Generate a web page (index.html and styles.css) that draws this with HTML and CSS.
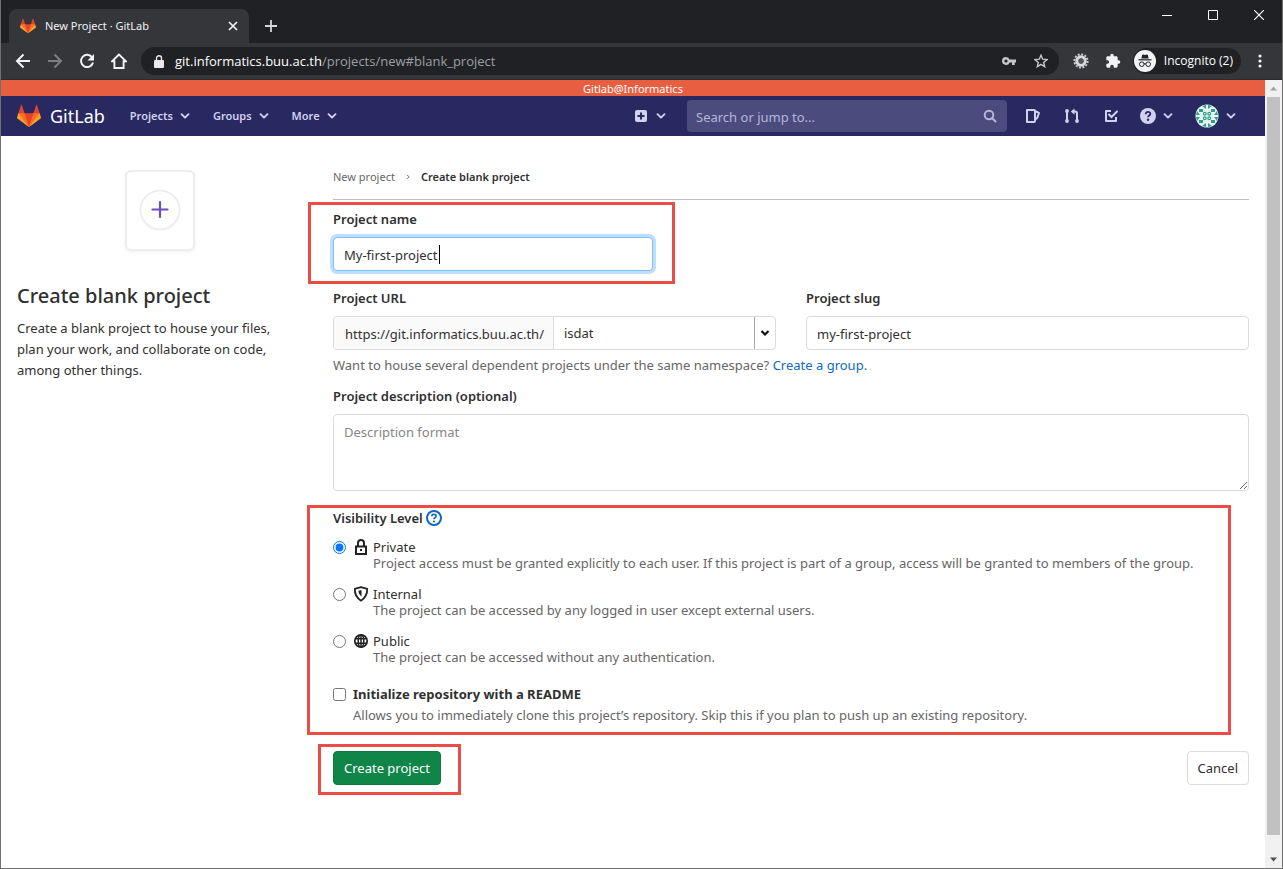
FILE: index.html
```html
<!DOCTYPE html>
<html lang="en">
<head>
<meta charset="utf-8">
<title>New Project · GitLab</title>
<link rel="stylesheet" href="styles.css">
</head>
<body>
<svg class="defs" aria-hidden="true">
  <symbol id="tanuki" viewBox="0 0 36 36">
    <path fill="#e24329" d="M2 14l9.38 9v-9l-4-12.28c-.205-.632-1.176-.632-1.38 0z"/>
    <path fill="#e24329" d="M34 14l-9.38 9v-9l4-12.28c.205-.632 1.176-.632 1.38 0z"/>
    <path fill="#e24329" d="M18 34.38 3 14h30z"/>
    <path fill="#fc6d26" d="M18 34.38 11.38 14H2l4 11z"/>
    <path fill="#fc6d26" d="M18 34.38 24.62 14H34l-4 11z"/>
    <path fill="#fca326" d="M2 14 .1 20.16c-.18.565 0 1.2.5 1.56L18 34.38z"/>
    <path fill="#fca326" d="m34 14 1.9 6.16c.18.565 0 1.2-.5 1.56L18 34.38z"/>
  </symbol>
  <symbol id="chevron" viewBox="0 0 10 10"><path d="M1.5 3.2 5 6.7l3.500-3.500" fill="none" stroke="currentColor" stroke-width="1.900" stroke-linecap="round" stroke-linejoin="round"/></symbol>
</svg>
<div class="window">
  <header class="tabs">
    <div class="tab">
      <svg class="tab-logo"><use href="#tanuki"/></svg>
      <span class="tab-title">New Project · GitLab</span>
      <button class="plain" aria-label="Close tab"><svg width="10" height="10" viewBox="0 0 10 10"><path d="M1 1l8 8M9 1 1 9" stroke="#f1f3f4" stroke-width="1.700"/></svg></button>
    </div>
    <button class="plain new-tab" aria-label="New tab"><svg width="12" height="12" viewBox="0 0 12 12"><path d="M6 0v12M0 6h12" stroke="#d5d7da" stroke-width="1.800"/></svg></button>
    <div class="window-buttons">
      <button class="plain" aria-label="Minimize"><svg width="10" height="10"><path d="M0 5.500h10" stroke="#fff"/></svg></button>
      <button class="plain" aria-label="Maximize"><svg width="10" height="10"><path d="M.5.5h9v9h-9z" fill="none" stroke="#fff"/></svg></button>
      <button class="plain" aria-label="Close"><svg width="10" height="10"><path d="M0 0l10 10M10 0 0 10" stroke="#fff" stroke-width="1.200"/></svg></button>
    </div>
  </header>
  <div class="toolbar">
    <button class="plain tool" aria-label="Back"><svg width="16" height="16" viewBox="0 0 16 16"><path d="M15 8H2M8.500 1.500 2 8l6.500 6.500" fill="none" stroke="#f1f3f4" stroke-width="2"/></svg></button>
    <button class="plain tool" aria-label="Forward"><svg width="16" height="16" viewBox="0 0 16 16"><path d="M1 8h13M7.500 1.500 14 8l-6.500 6.500" fill="none" stroke="#7c7e82" stroke-width="2"/></svg></button>
    <button class="plain tool" aria-label="Reload"><svg width="16" height="16" viewBox="0 0 16 16"><path d="M13.200 4.600A6.100 6.100 0 1 0 14 9.500" fill="none" stroke="#f1f3f4" stroke-width="2"/><path d="M15 1v6.500H8.500z" fill="#f1f3f4"/></svg></button>
    <button class="plain tool" aria-label="Home"><svg width="16" height="16" viewBox="0 0 16 16"><path d="M8 1.500 1 8.300h2.400V15h9.200V8.300H15z" fill="none" stroke="#f1f3f4" stroke-width="1.900"/></svg></button>
    <div class="address">
      <svg width="10" height="13" viewBox="0 0 10 13"><path d="M1 5h8q1 0 1 1v6q0 1-1 1H1q-1 0-1-1V6q0-1 1-1z" fill="#e8eaed"/><path d="M2.500 5.500V3.200a2.500 2.500 0 0 1 5 0v2.300" fill="none" stroke="#e8eaed" stroke-width="1.400"/></svg>
      <span class="url">git.informatics.buu.ac.th<span class="url-path">/projects/new#blank_project</span></span>
      <svg width="14" height="10" viewBox="0 0 14 10"><path fill="#c4c7cb" fill-rule="evenodd" d="M4 1a4 4 0 0 1 3.700 2.500H14v3h-1.300V9H10V6.500H7.700A4 4 0 1 1 4 1zm0 2.400a1.600 1.600 0 1 0 0 3.200 1.600 1.600 0 0 0 0-3.200z"/></svg>
      <svg width="14" height="14" viewBox="0 0 14 14"><path d="m7 1.200 1.700 4 4.300.4-3.300 2.800 1 4.300L7 10.400l-3.700 2.300 1-4.300L1 5.600l4.300-.4z" fill="none" stroke="#c4c7cb" stroke-width="1.400"/></svg>
    </div>
    <button class="plain tool extension" aria-label="Settings extension"><svg width="16" height="16" viewBox="0 0 16 16"><circle cx="8" cy="8" r="6.600" fill="none" stroke="#c9c9c9" stroke-width="2" stroke-dasharray="2 1.450"/><circle cx="8" cy="8" r="4.200" fill="none" stroke="#dadada" stroke-width="3"/><circle cx="8" cy="8" r="2.300" fill="#55575b"/></svg></button>
    <button class="plain tool" aria-label="Extensions"><svg width="16" height="16" viewBox="0 0 24 24"><path fill="#f1f3f4" d="M20.500 11H19V7c0-1.100-.9-2-2-2h-4V3.500a2.500 2.500 0 0 0-5 0V5H4c-1.100 0-2 .9-2 2v3.800h1.500a2.700 2.700 0 0 1 0 5.400H2V20c0 1.100.9 2 2 2h3.800v-1.500a2.700 2.700 0 0 1 5.400 0V22H17c1.100 0 2-.9 2-2v-4h1.500a2.500 2.500 0 0 0 0-5z"/></svg></button>
    <button class="profile">
      <svg width="22" height="22" viewBox="0 0 22 22"><circle cx="11" cy="11" r="11" fill="#f1f3f4"/><path d="M7.300 8.500 8.200 5q.3-.8 1-.5L11 5l1.800-.5q.7-.3 1 .5l.9 3.500z" fill="#202124"/><path d="M4.500 9.800h13" stroke="#202124" stroke-width="1.200"/><g fill="none" stroke="#202124"><circle cx="7.800" cy="14.200" r="2.300"/><circle cx="14.200" cy="14.200" r="2.300"/><path d="M10 14q1-.7 2 0"/></g></svg>
      <span>Incognito (2)</span>
    </button>
    <button class="plain menu" aria-label="Menu"><svg width="4" height="14"><g fill="#f1f3f4"><circle cx="2" cy="2" r="1.600"/><circle cx="2" cy="7" r="1.600"/><circle cx="2" cy="12" r="1.600"/></g></svg></button>
  </div>

  <div class="viewport">
    <div class="page">
      <div class="banner">Gitlab@Informatics</div>
      <nav class="navbar">
        <a class="brand" href="#"><svg class="brand-logo"><use href="#tanuki"/></svg>GitLab</a>
        <div class="nav-links">
          <button class="nav-item">Projects<svg class="chev"><use href="#chevron"/></svg></button>
          <button class="nav-item">Groups<svg class="chev"><use href="#chevron"/></svg></button>
          <button class="nav-item">More<svg class="chev"><use href="#chevron"/></svg></button>
        </div>
        <button class="nav-item nav-new" aria-label="New"><svg width="12" height="12" viewBox="0 0 12 12"><rect width="12" height="12" rx="2" fill="#d1d1f0"/><path d="M6 2.500v7M2.500 6h7" stroke="#292961" stroke-width="2"/></svg><svg class="chev"><use href="#chevron"/></svg></button>
        <div class="search">
          <input class="search-input" type="text" placeholder="Search or jump to..." aria-label="Search or jump to">
          <svg width="14" height="14" viewBox="0 0 14 14"><circle cx="6" cy="6" r="4.300" fill="none" stroke="#b5b5dc" stroke-width="2"/><path d="m9.300 9.300 3.200 3.200" stroke="#b5b5dc" stroke-width="2" stroke-linecap="round"/></svg>
        </div>
        <div class="nav-icons">
          <a href="#" class="nav-icon" aria-label="Issues"><svg width="16" height="16" viewBox="0 0 16 16"><path d="M2 2h7q1 0 1 1v10q0 1-1 1H2zM10 3l4 1.800-1.600 5-2.400 2" fill="none" stroke="#d1d1f0" stroke-width="2" stroke-linejoin="round"/></svg></a>
          <a href="#" class="nav-icon" aria-label="Merge requests"><svg width="16" height="16" viewBox="0 0 16 16"><path d="M3 2.500v11M8.500 3.500H11q2 0 2 2v8" fill="none" stroke="#d1d1f0" stroke-width="2"/><path d="M10.500.5v6.200L6.800 3.600z" fill="#d1d1f0"/><circle cx="3" cy="3" r="1.900" fill="#d1d1f0"/><circle cx="3" cy="13" r="1.900" fill="#d1d1f0"/><circle cx="13" cy="13" r="1.900" fill="#d1d1f0"/></svg></a>
          <a href="#" class="nav-icon" aria-label="To-Do List"><svg width="16" height="16" viewBox="0 0 16 16"><path d="M8 3H3v10h10V9" fill="none" stroke="#d1d1f0" stroke-width="2" stroke-linejoin="round"/><path d="m6 6.500 2.500 2.500L14 3.500" fill="none" stroke="#d1d1f0" stroke-width="2" stroke-linecap="round"/></svg></a>
        </div>
        <button class="nav-item nav-help" aria-label="Help"><svg width="16" height="16" viewBox="0 0 16 16"><circle cx="8" cy="8" r="8" fill="#d1d1f0"/><path d="M5.700 6.200C5.700 3 10.500 3.200 10.300 6c0 1.500-2.300 1.500-2.300 3.300" fill="none" stroke="#292961" stroke-width="1.800"/><circle cx="8" cy="11.700" r="1.200" fill="#292961"/></svg><svg class="chev"><use href="#chevron"/></svg></button>
        <button class="nav-item nav-user" aria-label="Account">
          <svg width="24" height="24" viewBox="0 0 24 24"><circle cx="12" cy="12" r="11.500" fill="#f0f0f0"/><g fill="#23a58c"><path d="M7 2l4-1v4zM17 2l-4-1v4zM7 22l4 1v-4zM17 22l-4 1v-4zM2 7l-1 4h4zM2 17l-1-4h4zM22 7l1 4h-4zM22 17l1-4h-4z"/><path d="M4 5h4v3H4zM16 5h4v3h-4zM4 16h4v3H4zM16 16h4v3h-4z"/><g fill="none" stroke="#23a58c" stroke-width="1.200"><circle cx="9.800" cy="9.800" r="1.400"/><circle cx="14.200" cy="9.800" r="1.400"/><circle cx="9.800" cy="14.200" r="1.400"/><circle cx="14.200" cy="14.200" r="1.400"/></g></g></svg><svg class="chev"><use href="#chevron"/></svg></button>
      </nav>

      <div class="content">
        <aside class="intro">
          <svg class="intro-art" width="82" height="94" viewBox="-1 0 82 94"><rect x="7" y="8" width="68" height="79" rx="5" fill="#fff" stroke="#f8f8f8" stroke-width="4"/><rect x="7" y="7" width="68" height="79" rx="5" fill="#fff" stroke="#eee" stroke-width="2"/><circle cx="41" cy="46" r="19.500" fill="#fff" stroke="#eee" stroke-width="2"/><path d="M41 38v15M33.500 45.500h15" stroke="#6b4fbb" stroke-width="2.200" stroke-linecap="round"/></svg>
          <h1 class="intro-title">Create blank project</h1>
          <p class="intro-text">Create a blank project to house your files, plan your work, and collaborate on code, among other things.</p>
        </aside>
        <main class="main">
          <nav class="crumbs" aria-label="Breadcrumb"><a href="#">New project</a><svg width="6" height="8" viewBox="0 0 6 8"><path d="m2 1.800 2 2-2 2" fill="none" stroke="#666"/></svg><strong>Create blank project</strong></nav>
          <form class="form">
            <div class="field field-name">
              <label for="name">Project name</label>
              <div class="name-box"><input class="control focused" id="name" type="text" value="My-first-project"><span class="caret"></span></div>
            </div>
            <div class="field columns">
              <div>
                <label for="namespace">Project URL</label>
                <div class="url-group">
                  <span class="url-prefix">https://git.informatics.buu.ac.th/</span>
                  <div class="select-box">
                    <select class="select" id="namespace"><option>isdat</option></select>
                    <span class="select-arrow"><svg width="10" height="10" viewBox="0 0 10 10"><path d="m1.500 3 3.500 3.500L8.500 3" fill="none" stroke="#111" stroke-width="2.200"/></svg></span>
                  </div>
                </div>
              </div>
              <div>
                <label for="slug">Project slug</label>
                <input class="control" id="slug" type="text" value="my-first-project">
              </div>
            </div>
            <p class="help">Want to house several dependent projects under the same namespace? <a href="#">Create a group.</a></p>
            <div class="field">
              <label for="description">Project description (optional)</label>
              <textarea class="control description" id="description" placeholder="Description format"></textarea>
            </div>
            <div class="field options">
              <fieldset class="visibility">
                <legend>Visibility Level <a href="#" aria-label="About visibility"><svg width="16" height="16" viewBox="0 0 16 16"><circle cx="8" cy="8" r="7" fill="none" stroke="#1068bf" stroke-width="2"/><path d="M5.800 6.300C5.800 3.500 10.200 3.700 10.100 6.200c0 1.400-2.100 1.400-2.100 3" fill="none" stroke="#1068bf" stroke-width="1.700"/><circle cx="8" cy="11.500" r="1.100" fill="#1068bf"/></svg></a></legend>
                <div class="option">
                  <input type="radio" name="visibility" id="private" checked>
                  <label for="private"><svg width="16" height="16" viewBox="0 0 16 16"><path d="M3 7.500h10V15H3zM5 7.500V4a3 3 0 0 1 6 0v3.500" fill="none" stroke="#222" stroke-width="2"/><rect x="7" y="10" width="2" height="2" fill="#222"/></svg>Private</label>
                  <p>Project access must be granted explicitly to each user. If this project is part of a group, access will be granted to members of the group.</p>
                </div>
                <div class="option">
                  <input type="radio" name="visibility" id="internal">
                  <label for="internal"><svg width="16" height="16" viewBox="0 0 16 16"><path d="M8 1.200 14.200 2.800Q14.500 10.500 8 14.700 1.500 10.500 1.800 2.800z" fill="none" stroke="#222" stroke-width="1.800" stroke-linejoin="round"/><path d="M8.500 4v6.500Q5.500 8.500 5.500 4.800z" fill="#222"/></svg>Internal</label>
                  <p>The project can be accessed by any logged in user except external users.</p>
                </div>
                <div class="option">
                  <input type="radio" name="visibility" id="public">
                  <label for="public"><svg width="16" height="16" viewBox="0 0 16 16"><circle cx="8" cy="8" r="6.200" fill="none" stroke="#222" stroke-width="1.700"/><g fill="none" stroke="#222" stroke-width="1.500"><ellipse cx="8" cy="8" rx="2.800" ry="6"/><path d="M8 2v12M2.500 5.700h11M2.500 10.300h11"/></g></svg>Public</label>
                  <p>The project can be accessed without any authentication.</p>
                </div>
              </fieldset>
              <div class="readme">
                <input type="checkbox" id="readme">
                <label for="readme">Initialize repository with a README</label>
                <p>Allows you to immediately clone this project’s repository. Skip this if you plan to push up an existing repository.</p>
              </div>
            </div>
            <div class="actions">
              <div class="submit"><button class="btn btn-success" type="button">Create project</button></div>
              <button class="btn" type="button">Cancel</button>
            </div>
          </form>
        </main>
      </div>
    </div>
    <div class="scrollbar">
      <svg width="17" height="17"><path d="m5 10.500 3.500-4 3.500 4z" fill="#a3a3a3"/></svg>
      <div class="thumb"></div>
      <svg width="17" height="17"><path d="m5 6.500 3.500 4 3.500-4z" fill="#505050"/></svg>
    </div>
  </div>
</div>
</body>
</html>
```
FILE: styles.css
```css
* { box-sizing: border-box; }
body { margin: 0; font: 13px/20px "Noto Sans", sans-serif; color: #303030; }
button, input, select, textarea { font: inherit; color: inherit; margin: 0; }
p, h1, fieldset { margin: 0; padding: 0; border: 0; }
a { color: #1068bf; text-decoration: none; }
svg { display: block; flex: none; }
.defs { position: absolute; width: 0; height: 0; }
.plain { display: grid; place-items: center; padding: 0; border: 0; background: none; }

.window { min-height: 100vh; display: flex; flex-direction: column; border: 1px solid #707070; border-top: 0; background: #fff; }

/* Browser chrome */
.tabs { display: flex; height: 43px; padding-left: 8px; background: #202124; color: #f1f3f4; font: 11px/16px "Noto Sans", sans-serif; }
.tab { display: flex; align-items: center; width: 240px; margin-top: 9px; padding: 0 11px; border-radius: 8px 8px 0 0; background: #35363a; }
.tab-logo { width: 16px; height: 16px; margin-right: 9px; }
.tab-title { flex: 1; }
.new-tab { width: 44px; margin-top: 9px; }
.window-buttons { display: flex; margin-left: auto; height: 30px; }
.window-buttons .plain { width: 46px; }
.toolbar { display: flex; align-items: center; height: 37px; padding: 0 12px 0 6px; background: #35363a; border-bottom: 1px solid #2b2c30; }
.tool { width: 32px; height: 32px; }
.address { flex: 1; display: flex; align-items: center; gap: 18px; height: 28px; margin-left: 6px; padding: 0 11px 0 13px; border-radius: 14px; background: #202124; }
.url { flex: 1; margin-left: -7px; font: 13px/18px "Open Sans", sans-serif; color: #fff; }
.url-path { color: #9aa0a6; }
.extension { margin-left: 6px; }
.profile { display: flex; align-items: center; gap: 8px; height: 26px; margin-left: 4px; padding: 0 8px 0 1px; border: 0; border-radius: 13px; background: #202124; color: #fff; font: 12px/16px "Open Sans", sans-serif; }
.menu { width: 20px; height: 28px; margin-left: 9px; }

/* Page and scroll bar */
.viewport { flex: 1; display: flex; }
.page { flex: 1; min-width: 0; }
.scrollbar { display: flex; flex-direction: column; width: 17px; background: #f1f1f1; }
.thumb { flex: 1; margin: 0 2px 16px; background: #c1c1c1; }
.banner { padding-top: 1px; background: #e75e40; color: #fff; text-align: center; font-size: 11px; line-height: 15px; }
.navbar { display: flex; align-items: center; height: 40px; padding: 0 29px 0 16px; background: #292961; color: #d1d1f0; }
.brand { display: flex; align-items: center; gap: 9px; color: #fff; font-size: 18px; line-height: 24px; }
.brand-logo { width: 24px; height: 24px; }
.nav-links { display: flex; gap: 23px; margin-left: 25px; }
.nav-item { display: flex; align-items: center; gap: 7px; padding: 0; border: 0; background: none; font: 600 11px/16px "Noto Sans", sans-serif; }
.chev { width: 10px; height: 10px; }
.nav-new { margin-left: auto; gap: 9px; }
.search { display: flex; align-items: center; width: 320px; height: 32px; margin-left: 21px; padding: 0 10px 0 9px; border-radius: 4px; background: #4b4b7e; }
.search-input { flex: 1; min-width: 0; padding: 1px 0 0; border: 0; background: none; outline: 0; }
.search-input::placeholder { color: #b5b5dc; }
.nav-icons { display: flex; gap: 23px; margin-left: 18px; }
.nav-help { margin-left: 21px; }
.nav-user { margin-left: 22px; }

.content { display: grid; grid-template-columns: 1fr 3fr; }
.intro, .main { padding: 0 16px; }
.intro { padding-top: 28px; }
.intro-art { margin: 0 auto; }
.intro-title { margin-top: 26px; font-size: 20px; line-height: 24px; font-weight: 500; }
.intro-text { margin-top: 10px; padding-right: 24px; line-height: 21px; }
.crumbs { display: flex; align-items: center; gap: 10px; height: 64px; padding-top: 19px; border-bottom: 1px solid #bfbfbf; font-size: 11px; line-height: 16px; }
.crumbs a { color: #666; }
.crumbs strong { font-weight: 600; }

/* Form */
.form { padding-top: 9px; }
.form label, .form legend { display: block; padding: 0; font-weight: 600; }
.field { position: relative; margin-bottom: 17px; }
.control { display: block; width: 100%; height: 34px; margin-top: 8px; padding: 7px 10px 5px; border: 1px solid #dbdbdb; border-radius: 4px; background: #fff; outline: 0; }
.control::placeholder { color: #868686; }
.name-box { position: relative; width: 320px; }
.focused { border-color: #80bdff; box-shadow: 0 0 0 3px #bfdeff; }
.caret { position: absolute; left: 106px; top: 8px; width: 1px; height: 19px; background: #000; }
.columns { display: grid; grid-template-columns: 1fr 1fr; gap: 30px; margin-bottom: 5px; }
.url-group { display: flex; height: 34px; margin-top: 8px; border: 1px solid #dbdbdb; border-radius: 4px; }
.url-prefix { display: flex; align-items: center; width: 220px; padding: 2px 0 0 11px; border-right: 1px solid #dbdbdb; border-radius: 3px 0 0 3px; background: #fafafa; }
.select-box { position: relative; flex: 1; }
.select { width: 100%; height: 32px; padding: 0 10px; border: 0; background: none; appearance: none; }
.select-arrow { position: absolute; right: 0; top: 0; display: grid; place-items: center; width: 21px; height: 32px; border-left: 1px solid #aaa; pointer-events: none; }
.help { margin-bottom: 11px; color: #666; }
.form .description { height: 77px; padding: 7px 10px; resize: vertical; }
.form .visibility legend { display: flex; align-items: center; gap: 3px; margin-bottom: 11px; font-weight: 600; }
.option { display: grid; grid-template-columns: 40px 1fr; line-height: 16px; margin-bottom: 15px; }
.option input, .readme input { grid-area: 1 / 1; width: 13px; height: 13px; align-self: center; }
.form .option label { grid-area: 1 / 1 / 2 / 3; display: flex; gap: 4px; margin-left: 20px; font-weight: 400; }
.option p { grid-column: 2; color: #666; }
.readme { display: grid; grid-template-columns: 20px 1fr; row-gap: 1px; padding-top: 4px; }
.form .readme label { font-weight: 700; }
.readme p { grid-column: 2; color: #666; }
.actions { display: flex; justify-content: space-between; padding-top: 9px; }
.submit { position: relative; }
.btn { height: 34px; padding: 0 10px; border: 1px solid #dbdbdb; border-radius: 4px; background: #fff; }
.btn-success { border-color: #0f7a40; background: #108548; color: #fff; }

/* Red call-out frames drawn over the form */
.field-name::after, .options::after, .submit::after { content: ""; position: absolute; border: 3px solid #eb4d46; pointer-events: none; }
.field-name::after { left: -25px; top: -7px; bottom: -13px; width: 361px; }
.options::after { left: -26px; right: 18px; top: -3px; bottom: -10px; }
.submit::after { left: -15px; right: -20px; top: -7px; bottom: -10px; }
```
